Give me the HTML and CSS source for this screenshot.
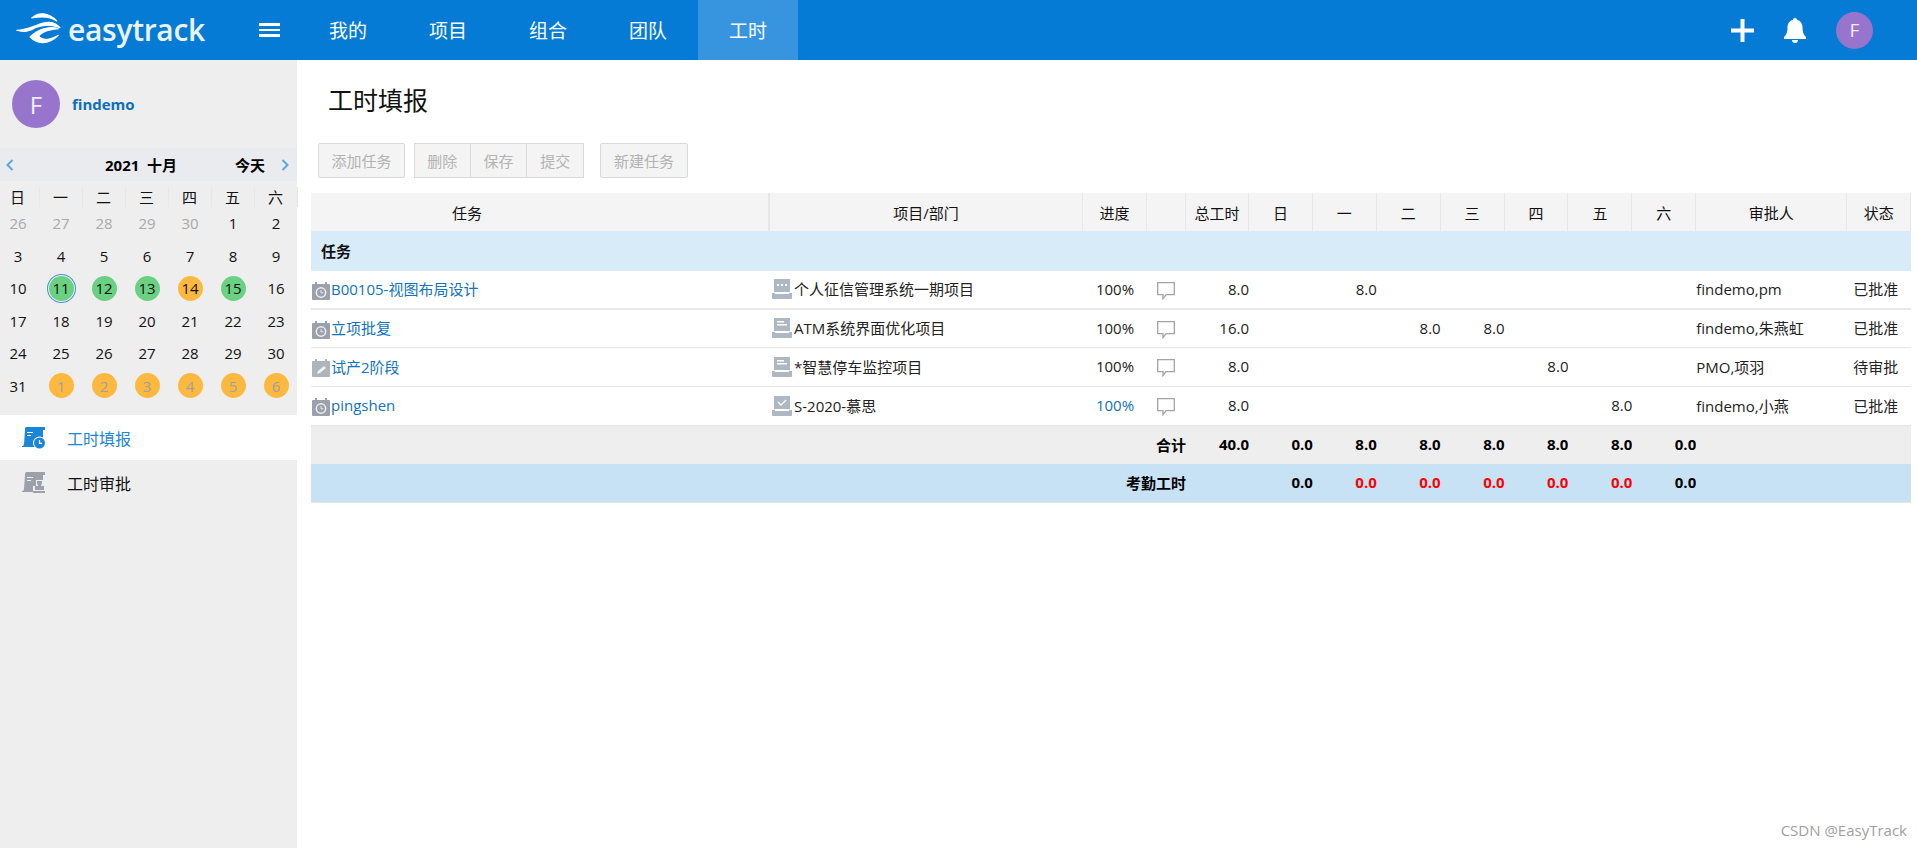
FILE: index.html
```html
<!DOCTYPE html>
<html lang="zh">
<head>
<meta charset="utf-8">
<title>工时填报</title>
<link rel="stylesheet" href="styles.css">
</head>
<body>
<svg class="defs" width="0" height="0" aria-hidden="true">
  <symbol id="cal-clock" viewBox="0 0 18 18">
    <path fill="#9ba0aa" d="M1 2h2V0h2v2h8V0h2v2h2a1 1 0 0 1 1 1v14a1 1 0 0 1-1 1H1a1 1 0 0 1-1-1V3a1 1 0 0 1 1-1z"/>
    <circle cx="9" cy="10.500" r="5.400" fill="#eceef1"/>
    <circle cx="9" cy="10.500" r="3.900" fill="#9ba0aa"/>
    <path d="M9 8.300v2.500h2.200" fill="none" stroke="#eceef1" stroke-width="1"/>
  </symbol>
  <symbol id="cal-edit" viewBox="0 0 18 18">
    <path fill="#aeb4bc" d="M1 2h2V0h2v2h8V0h2v2h2a1 1 0 0 1 1 1v14a1 1 0 0 1-1 1H1a1 1 0 0 1-1-1V3a1 1 0 0 1 1-1z"/>
    <path d="M5 15l1-3 6-5 2 2-6 5z" fill="#f1f2f4"/>
  </symbol>
  <symbol id="tray-dots" viewBox="0 0 20 20">
    <path fill="#aeb8c2" d="M2 0h16v13H2zM0 14h3v1h14v-1h3v5a1 1 0 0 1-1 1H1a1 1 0 0 1-1-1z"/>
    <path fill="#fff" d="M5 5h2v2H5zM9 5h2v2H9zM13 5h2v2h-2z"/>
  </symbol>
  <symbol id="tray-lines" viewBox="0 0 20 20">
    <path fill="#aeb8c2" d="M2 0h16v13H2zM0 14h3v1h14v-1h3v5a1 1 0 0 1-1 1H1a1 1 0 0 1-1-1z"/>
    <path fill="#fff" d="M5 3h7v1.500H5zM5 6h10v1.500H5z"/>
  </symbol>
  <symbol id="tray-check" viewBox="0 0 20 20">
    <path fill="#aeb8c2" d="M2 0h16v13H2zM0 14h3v1h14v-1h3v5a1 1 0 0 1-1 1H1a1 1 0 0 1-1-1z"/>
    <path fill="none" stroke="#fff" stroke-width="1.300" d="M6 6l3 3 5-5"/>
  </symbol>
  <symbol id="comment" viewBox="0 0 18 18">
    <path fill="none" stroke="#a3a3a3" stroke-width="1.300" d="M.7.700h16.600v12H9l-3 4v-4H.7z"/>
  </symbol>
</svg>

<header class="topbar">
  <div class="brand">
    <svg class="brand-mark" viewBox="0 0 46 38" width="46" height="38" aria-hidden="true">
      <path d="M15.700 7C22.300 1 32.300 1 40.700 10 34 5.300 25.700 5.300 15.700 7Z"/>
      <path d="M.7 19.300C10.700 19.300 19 14.300 27.300 12 35.700 10 40.700 12.700 44 16.700 35.700 13.300 27.300 13.300 19 16.700 14 20 9 22 .7 19.300Z"/>
      <path d="M42.300 17.700C32.300 14.300 20.700 19.300 14 26 20.700 33.300 32.300 34.300 42.300 24.300 34 29.300 27.300 29.300 23.300 26 22.300 22.700 30.700 18.700 42.300 17.700Z"/>
    </svg>
    <span class="brand-name">easytrack</span>
  </div>
  <button class="burger" aria-label="菜单"><i></i><i></i><i></i></button>
  <nav class="nav">
    <a class="nav-item">我的</a>
    <a class="nav-item">项目</a>
    <a class="nav-item">组合</a>
    <a class="nav-item">团队</a>
    <a class="nav-item is-active">工时</a>
  </nav>
  <div class="top-actions">
    <svg class="top-icon" viewBox="0 0 23 23" width="23" height="23" aria-hidden="true"><path fill="#fff" d="M9.500 0h4v9.500H23v4h-9.500V23h-4v-9.500H0v-4h9.500z"/></svg>
    <svg class="top-icon" viewBox="0 0 22 25" width="22" height="25" aria-hidden="true"><path fill="#fff" d="M11 0c1.200 0 2 .8 2 1.800 3.500 1 5.500 4 5.500 7.700 0 4.500 1 7.500 3.500 9.500v2H0v-2c2.500-2 3.500-5 3.500-9.500C3.500 5.800 5.500 2.800 9 1.800 9 .8 9.800 0 11 0zM8 22h6c0 1.800-1.300 3-3 3s-3-1.200-3-3z"/></svg>
    <span class="avatar avatar-sm">F</span>
  </div>
</header>

<div class="layout">
  <aside class="sidebar">
    <div class="user">
      <span class="avatar avatar-lg">F</span>
      <span class="user-name">findemo</span>
    </div>
    <div class="cal-bar">
      <svg class="chev" viewBox="0 0 8 12" width="8" height="12" aria-hidden="true"><path d="M6.500 1L1.500 6l5 5" fill="none" stroke="#5ba9dc" stroke-width="2"/></svg>
      <span class="cal-title">2021&nbsp; 十月</span>
      <span class="cal-today">今天</span>
      <svg class="chev" viewBox="0 0 8 12" width="8" height="12" aria-hidden="true"><path d="M1.500 1l5 5-5 5" fill="none" stroke="#5ba9dc" stroke-width="2"/></svg>
    </div>
    <div class="cal-week">
      <span>日</span><span>一</span><span>二</span><span>三</span><span>四</span><span>五</span><span>六</span>
    </div>
    <div class="cal-days">
      <span class="muted">26</span><span class="muted">27</span><span class="muted">28</span><span class="muted">29</span><span class="muted">30</span><span>1</span><span>2</span>
      <span>3</span><span>4</span><span>5</span><span>6</span><span>7</span><span>8</span><span>9</span>
      <span>10</span><span><b class="dot green today">11</b></span><span><b class="dot green">12</b></span><span><b class="dot green">13</b></span><span><b class="dot amber">14</b></span><span><b class="dot green">15</b></span><span>16</span>
      <span>17</span><span>18</span><span>19</span><span>20</span><span>21</span><span>22</span><span>23</span>
      <span>24</span><span>25</span><span>26</span><span>27</span><span>28</span><span>29</span><span>30</span>
      <span>31</span><span><b class="dot amber off">1</b></span><span><b class="dot amber off">2</b></span><span><b class="dot amber off">3</b></span><span><b class="dot amber off">4</b></span><span><b class="dot amber off">5</b></span><span><b class="dot amber off">6</b></span>
    </div>
    <a class="side-item is-active">
      <svg class="side-icon" viewBox="0 0 23 22" width="23" height="22" aria-hidden="true">
        <path fill="#1b86d8" d="M4 0h19v3h-2v8a6 6 0 0 0-7 9H0v-1a2 2 0 0 0 2-2l1-14a3 3 0 0 1 1-3z"/>
        <path fill="#fff" d="M5 5h6v1H5zM5 8h4v1H5z"/>
        <circle cx="17.500" cy="16" r="6.500" fill="#fff"/>
        <circle cx="17.500" cy="16" r="5.500" fill="#1b86d8"/>
        <path d="M17.500 13v3.300h2.500" fill="none" stroke="#fff" stroke-width="1.200"/>
      </svg>
      <span>工时填报</span>
    </a>
    <a class="side-item">
      <svg class="side-icon" viewBox="0 0 23 22" width="23" height="22" aria-hidden="true">
        <path fill="#9ba0aa" d="M4 0h19v3h-2v8a6 6 0 0 0-7 9H0v-1a2 2 0 0 0 2-2l1-14a3 3 0 0 1 1-3z"/>
        <path fill="#eee" d="M5 5h6v1H5zM5 8h4v1H5z"/>
        <path fill="#eee" d="M14 8h7v6h2v8H11v-8h3z"/>
        <path fill="#9ba0aa" d="M15 9h5v2l-1 3h3v4h-9v-4h3l-1-3zM11 19h12v2H11z"/>
      </svg>
      <span>工时审批</span>
    </a>
  </aside>

  <main class="main">
    <h1 class="page-title">工时填报</h1>
    <div class="toolbar">
      <button class="btn btn-add">添加任务</button>
      <div class="btn-group">
        <button class="btn">删除</button>
        <button class="btn">保存</button>
        <button class="btn">提交</button>
      </div>
      <button class="btn btn-new">新建任务</button>
    </div>
    <table class="sheet">
      <colgroup>
        <col class="c-task"><col class="c-proj"><col class="c-prog"><col class="c-note"><col class="c-total">
        <col class="c-day"><col class="c-day"><col class="c-day"><col class="c-day"><col class="c-day"><col class="c-day"><col class="c-day">
        <col class="c-appr"><col class="c-stat">
      </colgroup>
      <thead>
        <tr><th class="th-task">任务</th><th>项目/部门</th><th>进度</th><th></th><th>总工时</th><th>日</th><th>一</th><th>二</th><th>三</th><th>四</th><th>五</th><th>六</th><th>审批人</th><th>状态</th></tr>
      </thead>
      <tbody>
        <tr class="group"><td colspan="14">任务</td></tr>
        <tr class="row row-first">
          <td><div class="cell-icon"><svg class="ico-task"><use href="#cal-clock"/></svg><a class="link">B00105-视图布局设计</a></div></td>
          <td><div class="cell-icon"><svg class="ico-proj"><use href="#tray-dots"/></svg><span>个人征信管理系统一期项目</span></div></td>
          <td class="ctr">100%</td><td><svg class="ico-note"><use href="#comment"/></svg></td><td class="num">8.0</td>
          <td></td><td class="num">8.0</td><td></td><td></td><td></td><td></td><td></td>
          <td>findemo,pm</td><td class="ctr status">已批准</td>
        </tr>
        <tr class="row row-short">
          <td><div class="cell-icon"><svg class="ico-task"><use href="#cal-clock"/></svg><a class="link">立项批复</a></div></td>
          <td><div class="cell-icon"><svg class="ico-proj"><use href="#tray-lines"/></svg><span>ATM系统界面优化项目</span></div></td>
          <td class="ctr">100%</td><td><svg class="ico-note"><use href="#comment"/></svg></td><td class="num">16.0</td>
          <td></td><td></td><td class="num">8.0</td><td class="num">8.0</td><td></td><td></td><td></td>
          <td>findemo,朱燕虹</td><td class="ctr status">已批准</td>
        </tr>
        <tr class="row">
          <td><div class="cell-icon"><svg class="ico-task"><use href="#cal-edit"/></svg><a class="link">试产2阶段</a></div></td>
          <td><div class="cell-icon"><svg class="ico-proj"><use href="#tray-lines"/></svg><span>*智慧停车监控项目</span></div></td>
          <td class="ctr">100%</td><td><svg class="ico-note"><use href="#comment"/></svg></td><td class="num">8.0</td>
          <td></td><td></td><td></td><td></td><td class="num">8.0</td><td></td><td></td>
          <td>PMO,项羽</td><td class="ctr status">待审批</td>
        </tr>
        <tr class="row">
          <td><div class="cell-icon"><svg class="ico-task"><use href="#cal-clock"/></svg><a class="link">pingshen</a></div></td>
          <td><div class="cell-icon"><svg class="ico-proj"><use href="#tray-check"/></svg><span>S-2020-慕思</span></div></td>
          <td class="ctr"><a class="link">100%</a></td><td><svg class="ico-note"><use href="#comment"/></svg></td><td class="num">8.0</td>
          <td></td><td></td><td></td><td></td><td></td><td class="num">8.0</td><td></td>
          <td>findemo,小燕</td><td class="ctr status">已批准</td>
        </tr>
        <tr class="sum">
          <td colspan="4" class="num">合计</td><td class="num">40.0</td>
          <td class="num">0.0</td><td class="num">8.0</td><td class="num">8.0</td><td class="num">8.0</td><td class="num">8.0</td><td class="num">8.0</td><td class="num">0.0</td>
          <td></td><td></td>
        </tr>
        <tr class="attend">
          <td colspan="4" class="num">考勤工时</td><td></td>
          <td class="num">0.0</td><td class="num red">0.0</td><td class="num red">0.0</td><td class="num red">0.0</td><td class="num red">0.0</td><td class="num red">0.0</td><td class="num">0.0</td>
          <td></td><td></td>
        </tr>
      </tbody>
    </table>
    <div class="watermark">CSDN @EasyTrack</div>
  </main>
</div>
</body>
</html>
```
FILE: styles.css
```css
* { box-sizing: border-box; }
html, body { margin: 0; padding: 0; height: 100%; }
body {
  width: 1917px;
  height: 848px;
  overflow: hidden;
  background: #fff;
  color: #111;
  font: 15px "Open Sans", "Noto Sans CJK SC", sans-serif;
}
.defs { display: block; height: 0; }
.topbar {
  display: flex;
  align-items: center;
  height: 60px;
  background: #067bd5;
  color: #fff;
}
.brand { display: flex; align-items: center; gap: 6px; width: 259px; padding-left: 16px; }
.brand-mark path { fill: #fff; stroke: #fff; stroke-width: 1.100px; stroke-linejoin: round; }
.brand-name { font-size: 30px; font-weight: 600; line-height: 36px; letter-spacing: -0.3px; color: #eaf3fa; }
.burger {
  display: flex;
  flex-direction: column;
  gap: 3px;
  width: 21px;
  padding: 0;
  border: 0;
  background: none;
}
.burger i { display: block; height: 2.500px; background: #fff; }
.nav { display: flex; margin-left: 18px; align-self: stretch; }
.nav-item {
  display: flex;
  align-items: center;
  justify-content: center;
  width: 100px;
  font-size: 19px;
  color: #fff;
}
.nav-item.is-active { background: #3695de; }
.top-actions { display: flex; align-items: center; margin-left: auto; padding-right: 44px; }
.top-icon { margin-right: 30px; }
.avatar {
  display: flex;
  align-items: center;
  justify-content: center;
  border-radius: 50%;
  background: #9775cc;
  color: #f1ecf8;
}
.avatar-sm { width: 37px; height: 37px; font-size: 19px; }
.avatar-lg { width: 48px; height: 48px; font-size: 24px; }

.layout { display: flex; height: 788px; }
.sidebar { flex: 0 0 297px; width: 297px; min-width: 0; background: #eee; }
.user { display: flex; align-items: center; gap: 12px; height: 88px; padding-left: 12px; }
.user-name { font-size: 15px; font-weight: 700; color: #0d6ebd; }
.cal-bar {
  display: flex;
  align-items: center;
  height: 33px;
  padding-left: 6px;
  background: #e9ebef;
  font-weight: 700;
  color: #000;
}
.cal-title { margin-left: 91px; width: 130px; }
.cal-today { width: 46px; }
.cal-week, .cal-days {
  display: grid;
  grid-template-columns: repeat(7, 43px);
  width: 301px;
  margin-left: -3.500px;
  text-align: center;
}
.cal-week { height: 26px; padding-top: 6px; align-items: center; }
.cal-week span { line-height: 20px; border-right: 1px solid #e6e7ec; }
.cal-days { grid-auto-rows: 32.500px; align-items: center; justify-items: center; height: 208px; align-content: start; }
.cal-days > span { display: flex; align-items: center; justify-content: center; }
.muted { color: #a9a9a9; }
.dot {
  display: flex;
  align-items: center;
  justify-content: center;
  width: 25px;
  height: 25px;
  border-radius: 50%;
  font-weight: 400;
}
.green { background: #69d181; }
.amber { background: #fdb93f; }
.off { color: #a0a0a0; }
.today { box-shadow: 0 0 0 1px #eee, 0 0 0 2px #3f94dc; }
.side-item {
  display: flex;
  align-items: center;
  gap: 22px;
  height: 45px;
  padding-left: 22px;
  font-size: 16px;
  color: #111;
}
.side-item.is-active { background: #fff; color: #1b86d8; }

.main { flex: 1; min-width: 0; padding: 0 6px 0 14px; position: relative; }
.page-title { margin: 0; padding: 20px 0 0 17px; height: 83px; font-size: 25px; font-weight: 400; line-height: 40px; color: #111; }
.toolbar { display: flex; height: 50px; padding-left: 7px; }
.btn {
  height: 35px;
  padding: 0;
  border: 1px solid #d9d9d9;
  border-radius: 2px;
  background: #f4f4f4;
  color: #b3b3b3;
  font: inherit;
}
.btn-add { width: 87px; }
.btn-group { display: flex; margin-left: 9px; }
.btn-group .btn { width: 56.670px; border-radius: 0; }
.btn-group .btn + .btn { border-left: 0; }
.btn-new { margin-left: 16px; width: 88px; }

.sheet { width: 1600px; table-layout: fixed; border-collapse: separate; border-spacing: 0; }
.c-task { width: 459px; }
.c-proj { width: 313px; }
.c-prog { width: 64px; }
.c-note { width: 39px; }
.c-total { width: 63px; }
.c-day { width: 63.900px; }
.c-appr { width: 151px; }
.c-stat { width: 64px; }
.sheet th {
  height: 38px;
  padding: 0;
  background: #f4f4f4;
  border-right: 1px solid #e7e7eb;
  font-weight: 400;
  color: #111;
}
.sheet .th-task { padding-right: 145px; border-right-width: 2px; }
.sheet td { padding: 0 0 2px; white-space: nowrap; overflow: hidden; }
.sheet td.status { padding-right: 7px; }
.group td { height: 40px; padding-left: 10px; background: #d7ebf9; font-weight: 700; }
.row td { height: 39px; border-bottom: 1px solid #e6e6ea; color: #222; }
.row-first td { border-bottom: 2px solid #e8e8ee; }
.row-short td { height: 38px; }
.cell-icon { display: flex; align-items: center; }
.ico-task { width: 18px; height: 18px; margin: 4px 1px 0 1px; flex: none; }
.ico-proj { width: 20px; height: 20px; margin: 1px 2px 0 2px; flex: none; }
.ico-note { display: block; width: 18px; height: 18px; margin: 4px 0 0 10px; }
.link { color: #1172bd; }
.ctr { text-align: center; }
.num { text-align: right; }
.sum td, .attend td { font-weight: 700; color: #000; }
.sum td { height: 38px; background: #eee; }
.attend td { height: 39px; background: #c7e2f5; border-bottom: 1px solid #e6e6ea; }
.attend td.red { color: #f00; }
.watermark {
  position: absolute;
  right: 10px;
  bottom: 8px;
  font-size: 15px;
  color: #a0a0a0;
}
```
